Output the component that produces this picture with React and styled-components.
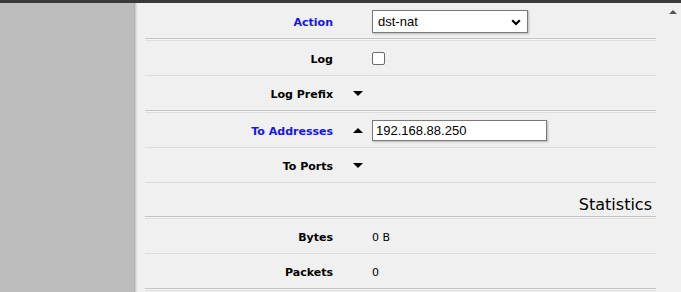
import * as React from "react";
import styled, { createGlobalStyle } from "styled-components";

const GlobalStyle = createGlobalStyle`
    html, body {
        margin: 0;
        padding: 0;
        background: #f0f0f0;
        overflow: hidden;
    }
`;

const App = () => {
  return (
    <>
      <GlobalStyle />
      <PageWrapper>
        <TopBar />
        <BodyWrapper>
          <Sidebar />
          <FormWrapper>
            <Row>
              <Label $link>Action</Label>
              <Toggle />
              <SelectWrapper>
                <Select defaultValue="dst-nat">
                  <option value="dst-nat">dst-nat</option>
                  <option value="src-nat">src-nat</option>
                  <option value="masquerade">masquerade</option>
                </Select>
                <Chevron width="10" height="7" viewBox="0 0 10 7">
                  <path d="M1.2 1.2 L5 5 L8.8 1.2" fill="none" stroke="#000" strokeWidth="2.2" />
                </Chevron>
              </SelectWrapper>
            </Row>
            <Divider />
            <Row $line>
              <Label>Log</Label>
              <Toggle />
              <Checkbox type="checkbox" />
            </Row>
            <Row>
              <Label>Log Prefix</Label>
              <Toggle><Arrow $dir="down" /></Toggle>
            </Row>
            <Divider />
            <Row $line>
              <Label $link>To Addresses</Label>
              <Toggle><Arrow $dir="up" /></Toggle>
              <TextInput defaultValue="192.168.88.250" />
            </Row>
            <Row $line>
              <Label>To Ports</Label>
              <Toggle><Arrow $dir="down" /></Toggle>
            </Row>
            <SectionTitle>Statistics</SectionTitle>
            <Divider />
            <Row $line>
              <Label>Bytes</Label>
              <Toggle />
              <Value>0 B</Value>
            </Row>
            <Row>
              <Label>Packets</Label>
              <Toggle />
              <Value>0</Value>
            </Row>
            <Divider />
          </FormWrapper>
          <Scrollbar>
            <ScrollButton>
              <Arrow $dir="up" $small />
            </ScrollButton>
          </Scrollbar>
        </BodyWrapper>
      </PageWrapper>
    </>
  );
};

const PageWrapper = styled.div`
    display: flex;
    flex-direction: column;
    height: 292px;
    font-family: "DejaVu Sans", Verdana, sans-serif;
`;

const TopBar = styled.div`
    height: 3px;
    background: #393939;
    flex-shrink: 0;
`;

const BodyWrapper = styled.div`
    display: flex;
    flex: 1;
    min-height: 0;
`;

const Sidebar = styled.div`
    width: 134px;
    background: #bdbdbd;
    border-right: 1px solid #b2b2b2;
    box-shadow: 1px 0 0 #cdcdcd, 2px 0 0 #dedede, 3px 0 0 #ebebeb;
    flex-shrink: 0;
`;

const FormWrapper = styled.div`
    flex: 1;
    padding: 1px 8px 0 10px;
    display: flex;
    flex-direction: column;
`;

const Row = styled.div`
    display: grid;
    grid-template-columns: 188px 39px 1fr;
    align-items: center;
    height: 34px;
    flex-shrink: 0;
    border-bottom: ${p => p.$line ? '1px solid #dcdcdc' : 'none'};
`;

const Divider = styled.div`
    height: 3px;
    box-sizing: border-box;
    border-top: 1px solid #c3c3c3;
    border-bottom: 1px solid #dedede;
    background: #f7f7f7;
    flex-shrink: 0;
`;

const Label = styled.div`
    text-align: right;
    font-size: 11px;
    font-weight: bold;
    padding-top: 2px;
    color: ${p => p.$link ? '#1414f0' : '#000'};
`;

const Toggle = styled.div`
    display: flex;
    align-items: center;
    padding-left: 20px;
`;

const Arrow = styled.span`
    width: 0;
    height: 0;
    border-left: ${p => p.$small ? 4 : 5}px solid transparent;
    border-right: ${p => p.$small ? 4 : 5}px solid transparent;
    border-top: ${p => p.$dir === 'down' ? `${p.$small ? 4 : 5}px solid ${p.$small ? '#555' : '#000'}` : 'none'};
    border-bottom: ${p => p.$dir === 'up' ? `${p.$small ? 4 : 5}px solid ${p.$small ? '#555' : '#000'}` : 'none'};
`;

const SelectWrapper = styled.div`
    position: relative;
    width: 156px;
    height: 23px;
`;

const Select = styled.select`
    appearance: none;
    width: 100%;
    height: 100%;
    box-sizing: border-box;
    border: 1px solid #7a7a7a;
    border-radius: 0;
    background: #fff;
    box-shadow: 1px 1px 2px rgba(0, 0, 0, 0.25);
    font-family: "Liberation Sans", Arial, sans-serif;
    font-size: 13px;
    color: #000;
    padding: 1px 0 0 5px;
    outline: none;
`;

const Chevron = styled.svg`
    position: absolute;
    right: 7px;
    top: 9px;
    pointer-events: none;
`;

const Checkbox = styled.input`
    appearance: none;
    width: 13px;
    height: 13px;
    margin: 1px 0 0;
    border: 1px solid #6b6b6b;
    border-radius: 2px;
    background: #fff;
`;

const TextInput = styled.input`
    width: 175px;
    height: 21px;
    box-sizing: border-box;
    border: 1px solid #7a7a7a;
    background: #fff;
    box-shadow: 1px 1px 2px rgba(0, 0, 0, 0.25);
    font-family: "Liberation Sans", Arial, sans-serif;
    font-size: 13px;
    color: #000;
    padding: 1px 0 0 3px;
    outline: none;
`;

const Value = styled.div`
    font-size: 11px;
    padding-top: 2px;
    color: #000;
`;

const SectionTitle = styled.div`
    height: 33px;
    flex-shrink: 0;
    display: flex;
    align-items: flex-end;
    justify-content: flex-end;
    padding: 0 4px 2px 0;
    box-sizing: border-box;
    font-size: 16px;
    color: #000;
`;

const Scrollbar = styled.div`
    width: 17px;
    flex-shrink: 0;
    background: #f0f0f0;
`;

const ScrollButton = styled.div`
    height: 17px;
    display: flex;
    align-items: center;
    justify-content: center;
`;

export default App;
